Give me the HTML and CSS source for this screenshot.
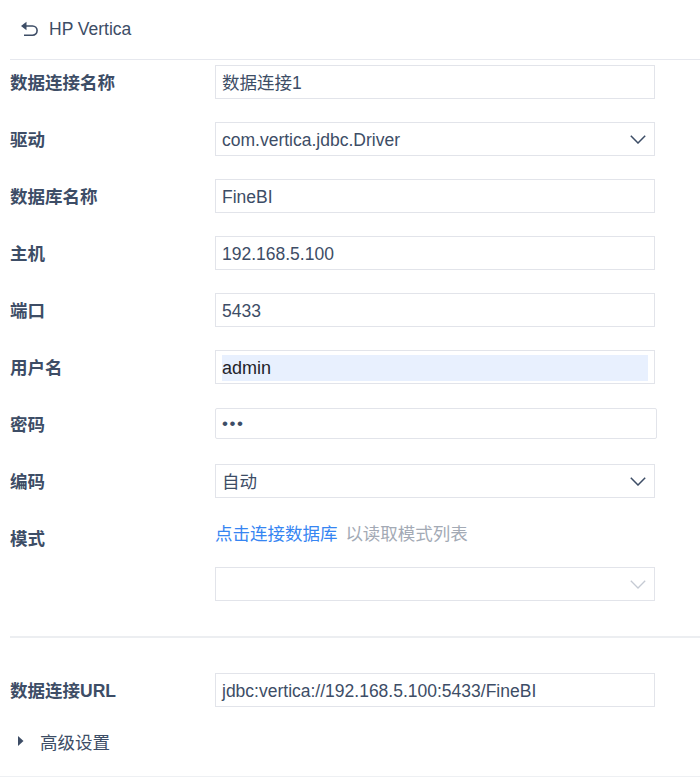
FILE: index.html
```html
<!DOCTYPE html>
<html lang="zh-CN">
<head>
<meta charset="utf-8">
<title>HP Vertica</title>
<link rel="stylesheet" href="styles.css">
</head>
<body>
<div class="header">
  <svg class="back" width="18" height="16" viewBox="0 0 18 16">
    <path d="M1 5 L6.5 0.8 L6.5 9.2 Z" fill="#3d4d66"/>
    <path d="M5 5 H12.5 A4.6 4.6 0 0 1 12.5 14.2 H4" fill="none" stroke="#3d4d66" stroke-width="1.6"/>
  </svg>
  <span class="title">HP Vertica</span>
</div>

<div class="form">
  <div class="row">
    <div class="label">数据连接名称</div>
    <div class="field">数据连接1</div>
  </div>
  <div class="row">
    <div class="label">驱动</div>
    <div class="field select"><span>com.vertica.jdbc.Driver</span>
      <svg class="chev" width="16" height="9" viewBox="0 0 16 9"><path d="M0.8 0.8 L8 8 L15.2 0.8" fill="none" stroke="#3d4d66" stroke-width="1.5"/></svg>
    </div>
  </div>
  <div class="row">
    <div class="label">数据库名称</div>
    <div class="field">FineBI</div>
  </div>
  <div class="row">
    <div class="label">主机</div>
    <div class="field">192.168.5.100</div>
  </div>
  <div class="row">
    <div class="label">端口</div>
    <div class="field">5433</div>
  </div>
  <div class="row">
    <div class="label">用户名</div>
    <div class="field autofill"><span class="fill">admin</span></div>
  </div>
  <div class="row">
    <div class="label">密码</div>
    <div class="field wide"><span class="dots">•••</span></div>
  </div>
  <div class="row">
    <div class="label">编码</div>
    <div class="field select"><span>自动</span>
      <svg class="chev" width="16" height="9" viewBox="0 0 16 9"><path d="M0.8 0.8 L8 8 L15.2 0.8" fill="none" stroke="#3d4d66" stroke-width="1.5"/></svg>
    </div>
  </div>
  <div class="row mode">
    <div class="label">模式</div>
    <div class="mode-body">
      <div class="hint"><span class="link">点击连接数据库</span> <span class="gray">以读取模式列表</span></div>
      <div class="field select empty">
        <svg class="chev" width="16" height="9" viewBox="0 0 16 9"><path d="M0.8 0.8 L8 8 L15.2 0.8" fill="none" stroke="#c5cad3" stroke-width="1.3"/></svg>
      </div>
    </div>
  </div>
  <div class="divider"></div>
  <div class="row url">
    <div class="label">数据连接URL</div>
    <div class="field">jdbc:vertica://192.168.5.100:5433/FineBI</div>
  </div>
  <div class="advanced">
    <svg class="tri" width="6" height="10" viewBox="0 0 6 10"><path d="M0 0 L5.5 5 L0 10 Z" fill="#3d4d66"/></svg>
    <span>高级设置</span>
  </div>
</div>
<div class="bottom"></div>
</body>
</html>
```

FILE: styles.css
```css
* { box-sizing: border-box; }
html, body { margin: 0; padding: 0; background: #fff; }
body {
  font-family: "Liberation Sans", "Noto Sans CJK SC", sans-serif;
  font-size: 17.5px;
  color: #3d4d66;
  width: 700px;
  height: 778px;
  overflow: hidden;
  position: relative;
}
.header {
  margin-left: 10px;
  height: 60px;
  padding-left: 10px;
  display: flex;
  align-items: center;
  border-bottom: 1px solid #e6e8ee;
}
.back { margin-top: -1px; }
.title { margin-left: 11px; color: #3d4d66; }
.form { padding: 5px 0 0 10px; }
.row {
  display: flex;
  align-items: flex-start;
  margin-bottom: 23px;
}
.label {
  width: 205px;
  flex: none;
  height: 34px;
  line-height: 34px;
  padding-top: 1px;
  font-weight: bold;
  color: #3d4d66;
}
.field {
  width: 440px;
  height: 34px;
  line-height: 32px;
  border: 1px solid #e2e4ea;
  padding: 1px 6px 0;
  color: #3d4d66;
  white-space: nowrap;
}
.field.wide { width: 442px; height: 31px; line-height: 29px; margin-top: 1px; border-radius: 2px; padding-top: 0; }
.select { display: flex; justify-content: space-between; align-items: center; padding-right: 8px; }
.select .chev { flex: none; }
.empty { justify-content: flex-end; margin-top: 20px; }
.autofill { padding: 4px 6px 2px 6px; }
.fill {
  display: block;
  height: 26px;
  line-height: 27px;
  background: #e8f0fe;
  color: #1f2329;
  font-size: 18px;
}
.dots { font-size: 17px; letter-spacing: 1.6px; color: #3d4d66; }
.mode { margin-bottom: 35px; }
.mode-body { display: flex; flex-direction: column; }
.hint { line-height: 26px; height: 26px; }
.link { color: #3685f2; }
.gray { color: #a3aab5; margin-left: 3px; }
.divider {
  height: 2px;
  background: #eceef1;
  margin-bottom: 35px;
}
.url { margin-bottom: 21px; }
.advanced {
  display: flex;
  align-items: center;
  height: 26px;
  padding-left: 8px;
}
.advanced .tri { flex: none; }
.advanced span { margin-left: 16px; }
.bottom {
  position: absolute;
  left: 0;
  right: 0;
  bottom: 1px;
  height: 1px;
  background: #eef0f3;
}
```
